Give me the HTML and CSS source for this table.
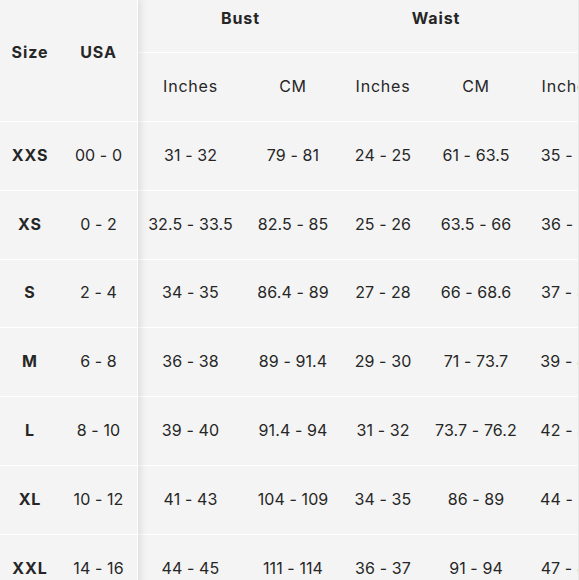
FILE: index.html
```html
<!DOCTYPE html>
<html>
<head>
<meta charset="utf-8">
<link rel="stylesheet" href="styles.css">
</head>
<body>
<div class="chart">
  <div class="fixed">
    <div class="fhead"><div class="cell b">Size</div><div class="cell b">USA</div></div>
    <div class="frow"><div class="cell b">XXS</div><div class="cell">00 - 0</div></div>
    <div class="frow"><div class="cell b">XS</div><div class="cell">0 - 2</div></div>
    <div class="frow"><div class="cell b">S</div><div class="cell">2 - 4</div></div>
    <div class="frow"><div class="cell b">M</div><div class="cell">6 - 8</div></div>
    <div class="frow"><div class="cell b">L</div><div class="cell">8 - 10</div></div>
    <div class="frow"><div class="cell b">XL</div><div class="cell">10 - 12</div></div>
    <div class="frow"><div class="cell b">XXL</div><div class="cell">14 - 16</div></div>
  </div>
  <div class="scroll">
    <div class="ghead">
      <div class="cell b span2">Bust</div>
      <div class="cell b span2">Waist</div>
      <div class="cell b span2">Hips</div>
    </div>
    <div class="row sub">
      <div class="cell">Inches</div><div class="cell">CM</div>
      <div class="cell">Inches</div><div class="cell">CM</div>
      <div class="cell">Inches</div><div class="cell">CM</div>
    </div>
    <div class="row"><div class="cell">31 - 32</div><div class="cell">79 - 81</div><div class="cell">24 - 25</div><div class="cell">61 - 63.5</div><div class="cell">35 - 36</div><div class="cell">89 - 91</div></div>
    <div class="row"><div class="cell">32.5 - 33.5</div><div class="cell">82.5 - 85</div><div class="cell">25 - 26</div><div class="cell">63.5 - 66</div><div class="cell">36 - 37</div><div class="cell">91 - 94</div></div>
    <div class="row"><div class="cell">34 - 35</div><div class="cell">86.4 - 89</div><div class="cell">27 - 28</div><div class="cell">66 - 68.6</div><div class="cell">37 - 38</div><div class="cell">94 - 96.5</div></div>
    <div class="row"><div class="cell">36 - 38</div><div class="cell">89 - 91.4</div><div class="cell">29 - 30</div><div class="cell">71 - 73.7</div><div class="cell">39 - 40</div><div class="cell">99 - 101.6</div></div>
    <div class="row"><div class="cell">39 - 40</div><div class="cell">91.4 - 94</div><div class="cell">31 - 32</div><div class="cell">73.7 - 76.2</div><div class="cell">42 - 43</div><div class="cell">106.7 - 109</div></div>
    <div class="row"><div class="cell">41 - 43</div><div class="cell">104 - 109</div><div class="cell">34 - 35</div><div class="cell">86 - 89</div><div class="cell">44 - 45</div><div class="cell">112 - 114</div></div>
    <div class="row"><div class="cell">44 - 45</div><div class="cell">111 - 114</div><div class="cell">36 - 37</div><div class="cell">91 - 94</div><div class="cell">47 - 48</div><div class="cell">119 - 122</div></div>
  </div>
</div>
</body>
</html>
```

FILE: styles.css
```css
html, body {
  margin: 0;
  padding: 0;
  background: #f4f4f4;
  overflow: hidden;
}
body {
  font-family: Inter, "Liberation Sans", sans-serif;
  font-size: 16px;
  letter-spacing: 0.1px;
  color: #262626;
  width: 579px;
  height: 580px;
}
.chart {
  display: flex;
  align-items: flex-start;
  box-sizing: border-box;
  width: 579px;
  height: 580px;
  overflow: hidden;
  border-right: 1px solid #e6e6e6;
}
.fixed {
  flex: none;
  width: 137px;
  border-right: 1px solid #fff;
  box-shadow: 3px 0 7px rgba(0, 0, 0, 0.09);
  position: relative;
  z-index: 2;
  background: #f4f4f4;
}
.fhead, .frow {
  display: grid;
  grid-template-columns: 60px 77px;
  border-bottom: 1px solid #fff;
}
.fhead {
  height: 121px;
  align-items: start;
}
.fhead .cell {
  padding-top: 42px;
}
.frow {
  height: 67.8px;
  align-items: center;
}
.cell {
  text-align: center;
  white-space: nowrap;
  line-height: 20px;
}
.frow .cell, .row .cell {
  padding-bottom: 2px;
}
.b {
  font-weight: 700;
  letter-spacing: 0.9px;
}
.sub .cell {
  letter-spacing: 0.8px;
}
.scroll {
  flex: none;
  width: 700px;
}
.ghead, .row {
  display: grid;
  grid-template-columns: 105px 100px 80px 106px 80px 100px;
  border-bottom: 1px solid #fff;
  align-items: center;
}
.ghead {
  height: 52px;
  align-items: start;
}
.ghead .cell {
  padding-top: 8px;
}
.span2 {
  grid-column: span 2;
}
.row {
  height: 67.8px;
}
.row.sub {
  height: 68px;
}
```
